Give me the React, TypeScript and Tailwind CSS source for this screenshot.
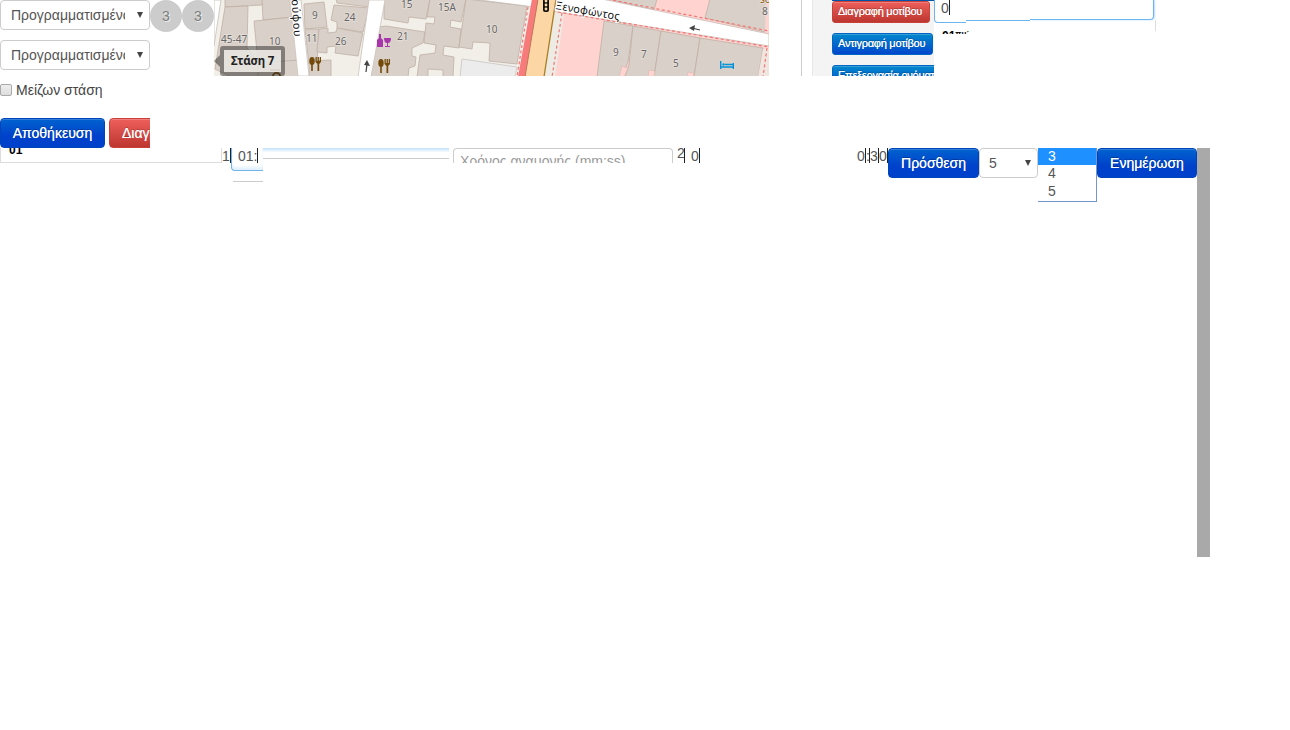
import React from 'react';

function Building({ d }: { d: string }) {
  return <path d={d} fill="#d9d0c9" stroke="#bfb0a5" strokeWidth="0.8" />;
}

function Fork({ x, y }: { x: number; y: number }) {
  return (
    <g transform={`translate(${x} ${y})`} fill="#734a08">
      <ellipse cx="3" cy="4" rx="2.7" ry="4" />
      <path d="M2.2 7h1.6v7H2.2zM6.5 0h1.3v4h.8V0h1.3v4h.8V0H12v5l-1.8 2v7H8.5V7L6.5 5z" />
    </g>
  );
}

function CityMap() {
  return (
    <svg className="block h-[76px] w-[555px]" viewBox="214 0 555 76">
      <rect x="214" width="555" height="76" fill="#f2efe9" />
      <path d="M214 0h7l-7 46z" fill="#fff" stroke="#cfc9c4" />
      <Building d="M225-1H263L262 5 225 7z" />
      <Building d="M225 7L248 6 247 48 259 62 258 77H231L215 69z" />
      <Building d="M262-1H292L292 17 263 20z" />
      <Building d="M254 21L294 17 299 61 258 63z" />
      <Building d="M258 63L299 60 301 77H258z" />
      <Building d="M304 4L324 2 327 27 305 29z" />
      <Building d="M336-1H371L369 7 337 3z" />
      <Building d="M334 5L369 8 363 32 337 28 337 22 331 20z" />
      <Building d="M305 29L319 29 317 63 309 64z" />
      <Building d="M319 29L328 28 328 33 336 32 337 28 363 33 358 56 335 53 336 46 327 47 327 53 317 52z" />
      <Building d="M309 61L331 60V77H309z" />
      <Building d="M384-1H430L426 19 409 17 408 23 384 19z" />
      <Building d="M386 26L425 32 423 43 412 48 412 56 416 57 415 66 409 68 408 77H371L377 27z" />
      <Building d="M430-1H466L461 22 451 20 450 27 461 29 459 48 444 46 443 55 454 57 453 77H443V70L428 69V77H417L420 55 435 53 436 45 424 43 426 23 434 24 435 17 427 17z" />
      <Building d="M466-1L527 6 517 64 489 61 490 43 473 42 472 49 459 47z" />
      <path d="M462 59L517 67 515 77H460z" fill="#ececec" stroke="#d1cdca" />
      <path d="M546 0H769V77H535z" fill="#ffd3d0" />
      <path d="M555 12L564 14 555 77H543z" fill="#eeebe5" />
      <Building d="M608-1H657L654 10z" />
      <Building d="M710-1H769V33L705 18z" />
      <path d="M766-1H769V34H765z" fill="#ffd3d0" />
      <Building d="M604 21L633 26 628 62 622 77H597z" />
      <Building d="M633 26L661 31 654 77H625L629 65z" />
      <Building d="M661 31L700 38 694 77H654z" />
      <Building d="M700 38L763 48 758 77H694z" />
      <path d="M622 66l6 2-4 9h-5zM649 70l6 1-1 6h-6zM688 72l6 1-1 4h-6z" fill="#ffd3d0" stroke="#d8bbb3" strokeWidth=".7" />
      <path d="M763 49L769 48V77H758z" fill="#f0e5df" />
      <path d="M290 0H301L309 76H298z" fill="#fff" stroke="#cbc3bc" strokeWidth=".8" />
      <path d="M369 0H385L371 77H358z" fill="#fff" stroke="#cbc3bc" strokeWidth=".8" />
      <path d="M472-1H602L769 34V46L557 12 527 6z" fill="#fff" stroke="#c8bdb7" strokeWidth=".8" />
      <path d="M537-1H556L544 77H523z" fill="#fcd6a4" />
      <path d="M532-1H538L525 77H518z" fill="#f77b7b" />
      <path d="M538-1L525 77" fill="none" stroke="#bd7658" />
      <path d="M556-1L544 77" fill="none" stroke="#a78024" strokeWidth="1.3" />
      <path d="M528 7L517 77M562 13L552 77M558 12L769 47M597-3L769 31M767 48L763 77" fill="none" stroke="#f47672" strokeWidth="1.2" strokeDasharray="3 2.5" />
      <rect x="543" y="-5" width="6" height="17" rx="2" fill="#111" />
      <g fill="#fcd6a4"><circle cx="546" cy="1" r="1.4" /><circle cx="546" cy="5" r="1.4" /><circle cx="546" cy="9" r="1.4" /></g>
      <g className="fill-[#666] text-[10px]" stroke="#e7e0db" strokeWidth="1.5" paintOrder="stroke" fontFamily="Noto Sans, sans-serif">
        <text x="221" y="43">45-47</text><text x="269" y="45">10</text><text x="312" y="19">9</text>
        <text x="344" y="21">24</text><text x="306" y="42">11</text><text x="335" y="45">26</text>
        <text x="401" y="8">15</text><text x="438" y="11">15A</text><text x="397" y="40">21</text>
        <text x="486" y="33">10</text><text x="613" y="56">9</text><text x="641" y="58">7</text>
        <text x="673" y="67">5</text><text x="762" y="15">8</text>
        <text x="760" y="3" className="fill-[#8b6115]">so</text>
      </g>
      <g className="fill-[#111] text-[11px]" stroke="#fff" strokeWidth="2" paintOrder="stroke" fontFamily="Noto Sans, sans-serif">
        <text transform="translate(291 -7) rotate(86)" textLength="44">κούφου</text>
        <text transform="translate(555 9) rotate(10)" textLength="65">Ξενοφώντος</text>
      </g>
      <Fork x={309} y={57} /><Fork x={378} y={59} />
      <path d="M379 34h2v4l2 2v7h-6v-7l2-2zM384 38h7c0 3-1 5-3 5v3h2v1h-5v-1h2v-3c-2 0-3-2-3-5z" fill="#a935ac" />
      <path d="M720.7 61v8M721 67H734M733.3 63v6M725 64.5h8" fill="none" stroke="#0092da" strokeWidth="1.4" /><circle cx="723.5" cy="64.5" r="1.2" fill="#0092da" />
      <path d="M700 30L692 28" stroke="#444" strokeWidth="1.2" /><path d="M689 28l6-3-1 6z" fill="#444" />
      <path d="M366 72L367 64" stroke="#444" strokeWidth="1.2" /><path d="M367 60l3 6-6-1z" fill="#444" />
      <path d="M273 77v-2l2-2h3l2 2v2M270 70h10" fill="none" stroke="#734a08" strokeWidth="1.4" />
    </svg>
  );
}

const field = 'border border-[#ccc] rounded bg-white text-[#555]';
const blueButton = 'h-[30px] shrink-0 rounded border border-[#0044bb] bg-linear-to-b from-[#0062cf] to-[#0041cb] to-60% text-sm leading-[28px] text-white [text-shadow:0_-1px_0_rgba(0,0,0,.25),0_0_.5px_#fff] shadow-[inset_0_1px_0_rgba(255,255,255,.2)]';
const miniButton = 'flex h-[22px] items-center rounded-[3px] pl-[5px] text-[11px] tracking-[-0.25px] whitespace-nowrap text-white [text-shadow:0_-1px_0_rgba(0,0,0,.25),0_0_.5px_#fff] shadow-[inset_0_1px_0_rgba(255,255,255,.2)]';

function Arrow() {
  return <svg className="h-[6px] w-[6px] shrink-0" viewBox="0 0 6 6"><path d="M0 0h6L3 6z" fill="#444" /></svg>;
}

function StopSelect() {
  return (
    <div className={`${field} flex h-[30px] w-[150px] items-center justify-between pr-[6px] pl-[10px]`}>
      <span className="w-[114px] overflow-hidden text-sm whitespace-nowrap">Προγραμματισμένος</span><Arrow />
    </div>
  );
}

function Circle() {
  return <div className="flex h-8 w-8 shrink-0 items-center justify-center rounded-full bg-[#ccc] text-sm text-[#7b8080] [text-shadow:1px_1px_0_#eee]">3</div>;
}

function Caret() {
  return <span className="h-[15px] w-px shrink-0 bg-[#222]" />;
}

export default function App() {
  return (
    <div className="h-[730px] w-[1290px] overflow-hidden bg-white font-['Liberation_Sans',Arial,sans-serif] text-sm text-[#333]">
      <div className="flex h-[148px] items-start">
        <div className="w-[150px] shrink-0 overflow-hidden">
          <StopSelect />
          <div className="h-[10px]" />
          <StopSelect />
          <label className="mt-[10px] flex h-5 items-center gap-1 text-[#444]">
            <span className="h-3 w-3 rounded-[2px] border border-[#aaa] bg-linear-to-b from-[#eee] to-[#ddd]" />
            Μείζων στάση
          </label>
          <div className="mt-[18px] flex gap-1">
            <button className={`${blueButton} w-[105px]`}>Αποθήκευση</button>
            <button className="h-[30px] shrink-0 rounded border border-[#c9403b] bg-linear-to-b from-[#ee5f5b] to-[#bd362f] px-3 text-sm leading-[28px] text-white shadow-[inset_0_1px_0_rgba(255,255,255,.2)] [text-shadow:0_-1px_0_rgba(0,0,0,.25),0_0_.5px_#fff]">Διαγραφή</button>
          </div>
        </div>
        <Circle /><Circle />
        <div className="relative h-[76px] w-[555px] shrink-0 overflow-hidden">
          <CityMap />
          <div className="absolute top-[46px] left-[6px] h-[30px] w-[65px] rounded-[3px] border-4 border-black/40 bg-[#e6e2df]/90 bg-clip-padding text-center font-['Noto_Sans',sans-serif] text-[11.5px] leading-[22px] font-bold tracking-[-0.2px] text-[#222]">Στάση 7</div>
          <span className="absolute top-[55px] left-0 border-y-[6px] border-r-[6px] border-y-transparent border-r-black/40" />
        </div>
        <div className="ml-8 flex h-[76px] w-[133px] shrink-0 border-l border-[#ccc] pl-[10px]">
          <div className="w-[122px] overflow-hidden border-l border-[#e8e8e8] bg-[#f4f4f4] pl-[19px]">
            <div className="h-px w-[102px] bg-[#0054aa]" />
            <div className={`${miniButton} w-[98px] border border-[#c9403b] bg-linear-to-b from-[#ee5f5b] to-[#bd362f]`}>Διαγραφή μοτίβου</div>
            <div className={`${miniButton} mt-[10px] w-[101px] border border-[#0066c4] bg-linear-to-b from-[#0088cc] to-[#0044cc]`}>Αντιγραφή μοτίβου</div>
            <div className={`${miniButton} mt-[10px] w-[132px] border border-[#0066c4] bg-linear-to-b from-[#0088cc] to-[#0044cc]`}>Επεξεργασία ονόματος</div>
          </div>
        </div>
        <div className="h-[34px] w-[222px] shrink-0 overflow-hidden">
          <div className="flex h-[23px] items-start">
            <div className="flex h-[23px] w-8 items-start rounded-bl border-b border-l border-[#6db5ef] pl-[6px] text-[#555]">
              <span className="leading-[16px]">0</span><Caret />
            </div>
            <div className="h-[21px] w-16 border-b border-[#6db5ef]" />
            <div className="h-[20px] w-[124px] rounded-br border-r border-b border-[#6db5ef] shadow-[1px_0_2px_#b7dcfa]" />
          </div>
          <div className="-mt-[3px] h-[11px] border-r border-[#ddd] pl-2">
            <div className="h-[14px] text-[12px] leading-[28px] font-bold text-black">01<span className="align-[4px] text-[8px]">πμ΄</span></div>
          </div>
        </div>
      </div>
      <div className="flex items-start">
        <div className="h-[15px] w-[222px] shrink-0 overflow-hidden border-r border-b border-l border-[#ddd] pl-2 text-[12px] leading-[4px] font-bold text-black">01</div>
        <div className="flex h-4 w-[9px] shrink-0 text-[#555]"><span className="w-[8px] leading-4">1</span><Caret /></div>
        <div className="h-[34px] w-8 shrink-0">
          <div className="flex h-[23px] rounded-bl border-b border-l border-[#6db5ef] pl-[6px] text-[#555] shadow-[inset_0_-3px_3px_#e3f1fd]"><span className="leading-4">01:</span><Caret /></div>
          <div className="ml-[2px] h-[11px] border-b border-[#ccc]" />
        </div>
        <div className="h-[11px] w-[186px] shrink-0 border-b border-[#ccc] bg-linear-to-b from-[#c2e1fb] to-white to-45%" />
        <div className="ml-1 h-[15px] w-[220px] shrink-0 overflow-hidden rounded-t border-x border-t border-[#ccc] pl-[6px] text-sm leading-[25px] text-[#999]">Χρόνος αναμονής (mm:ss)</div>
        <div className="ml-1 flex h-[15px] w-[23px] shrink-0 overflow-hidden text-[#555]"><span className="w-[7px] text-[14px] leading-[10px]">2</span><Caret /><span className="ml-[6px] w-[8px] leading-4">0</span><Caret /></div>
        <div className="ml-[157px] flex h-4 w-[31px] shrink-0 leading-4 text-[#555]"><span className="w-2">0</span><Caret /><span className="w-[3px]">:</span><Caret /><span className="w-2">3</span><Caret /><span className="w-2">0</span><Caret /></div>
        <button className={`${blueButton} w-[91px]`}>Πρόσθεση</button>
        <div className={`${field} flex h-[30px] w-[59px] shrink-0 items-center justify-between pr-[6px] pl-[9px]`}><span>5</span><Arrow /></div>
        <div className="h-[54px] w-[59px] shrink-0 border-r border-b border-[#7396ce] text-[#555]">
          <div className="h-[17px] bg-[#1e90ff] pl-[10px] leading-[17px] text-white">3</div>
          <div className="h-[18px] pl-[10px] leading-[17px]">4</div>
          <div className="h-[18px] pl-[10px] leading-[17px]">5</div>
        </div>
        <button className={`${blueButton} w-[100px]`}>Ενημέρωση</button>
        <div className="h-[409px] w-[13px] shrink-0 bg-[#a9a9a9]" />
      </div>
    </div>
  );
}
